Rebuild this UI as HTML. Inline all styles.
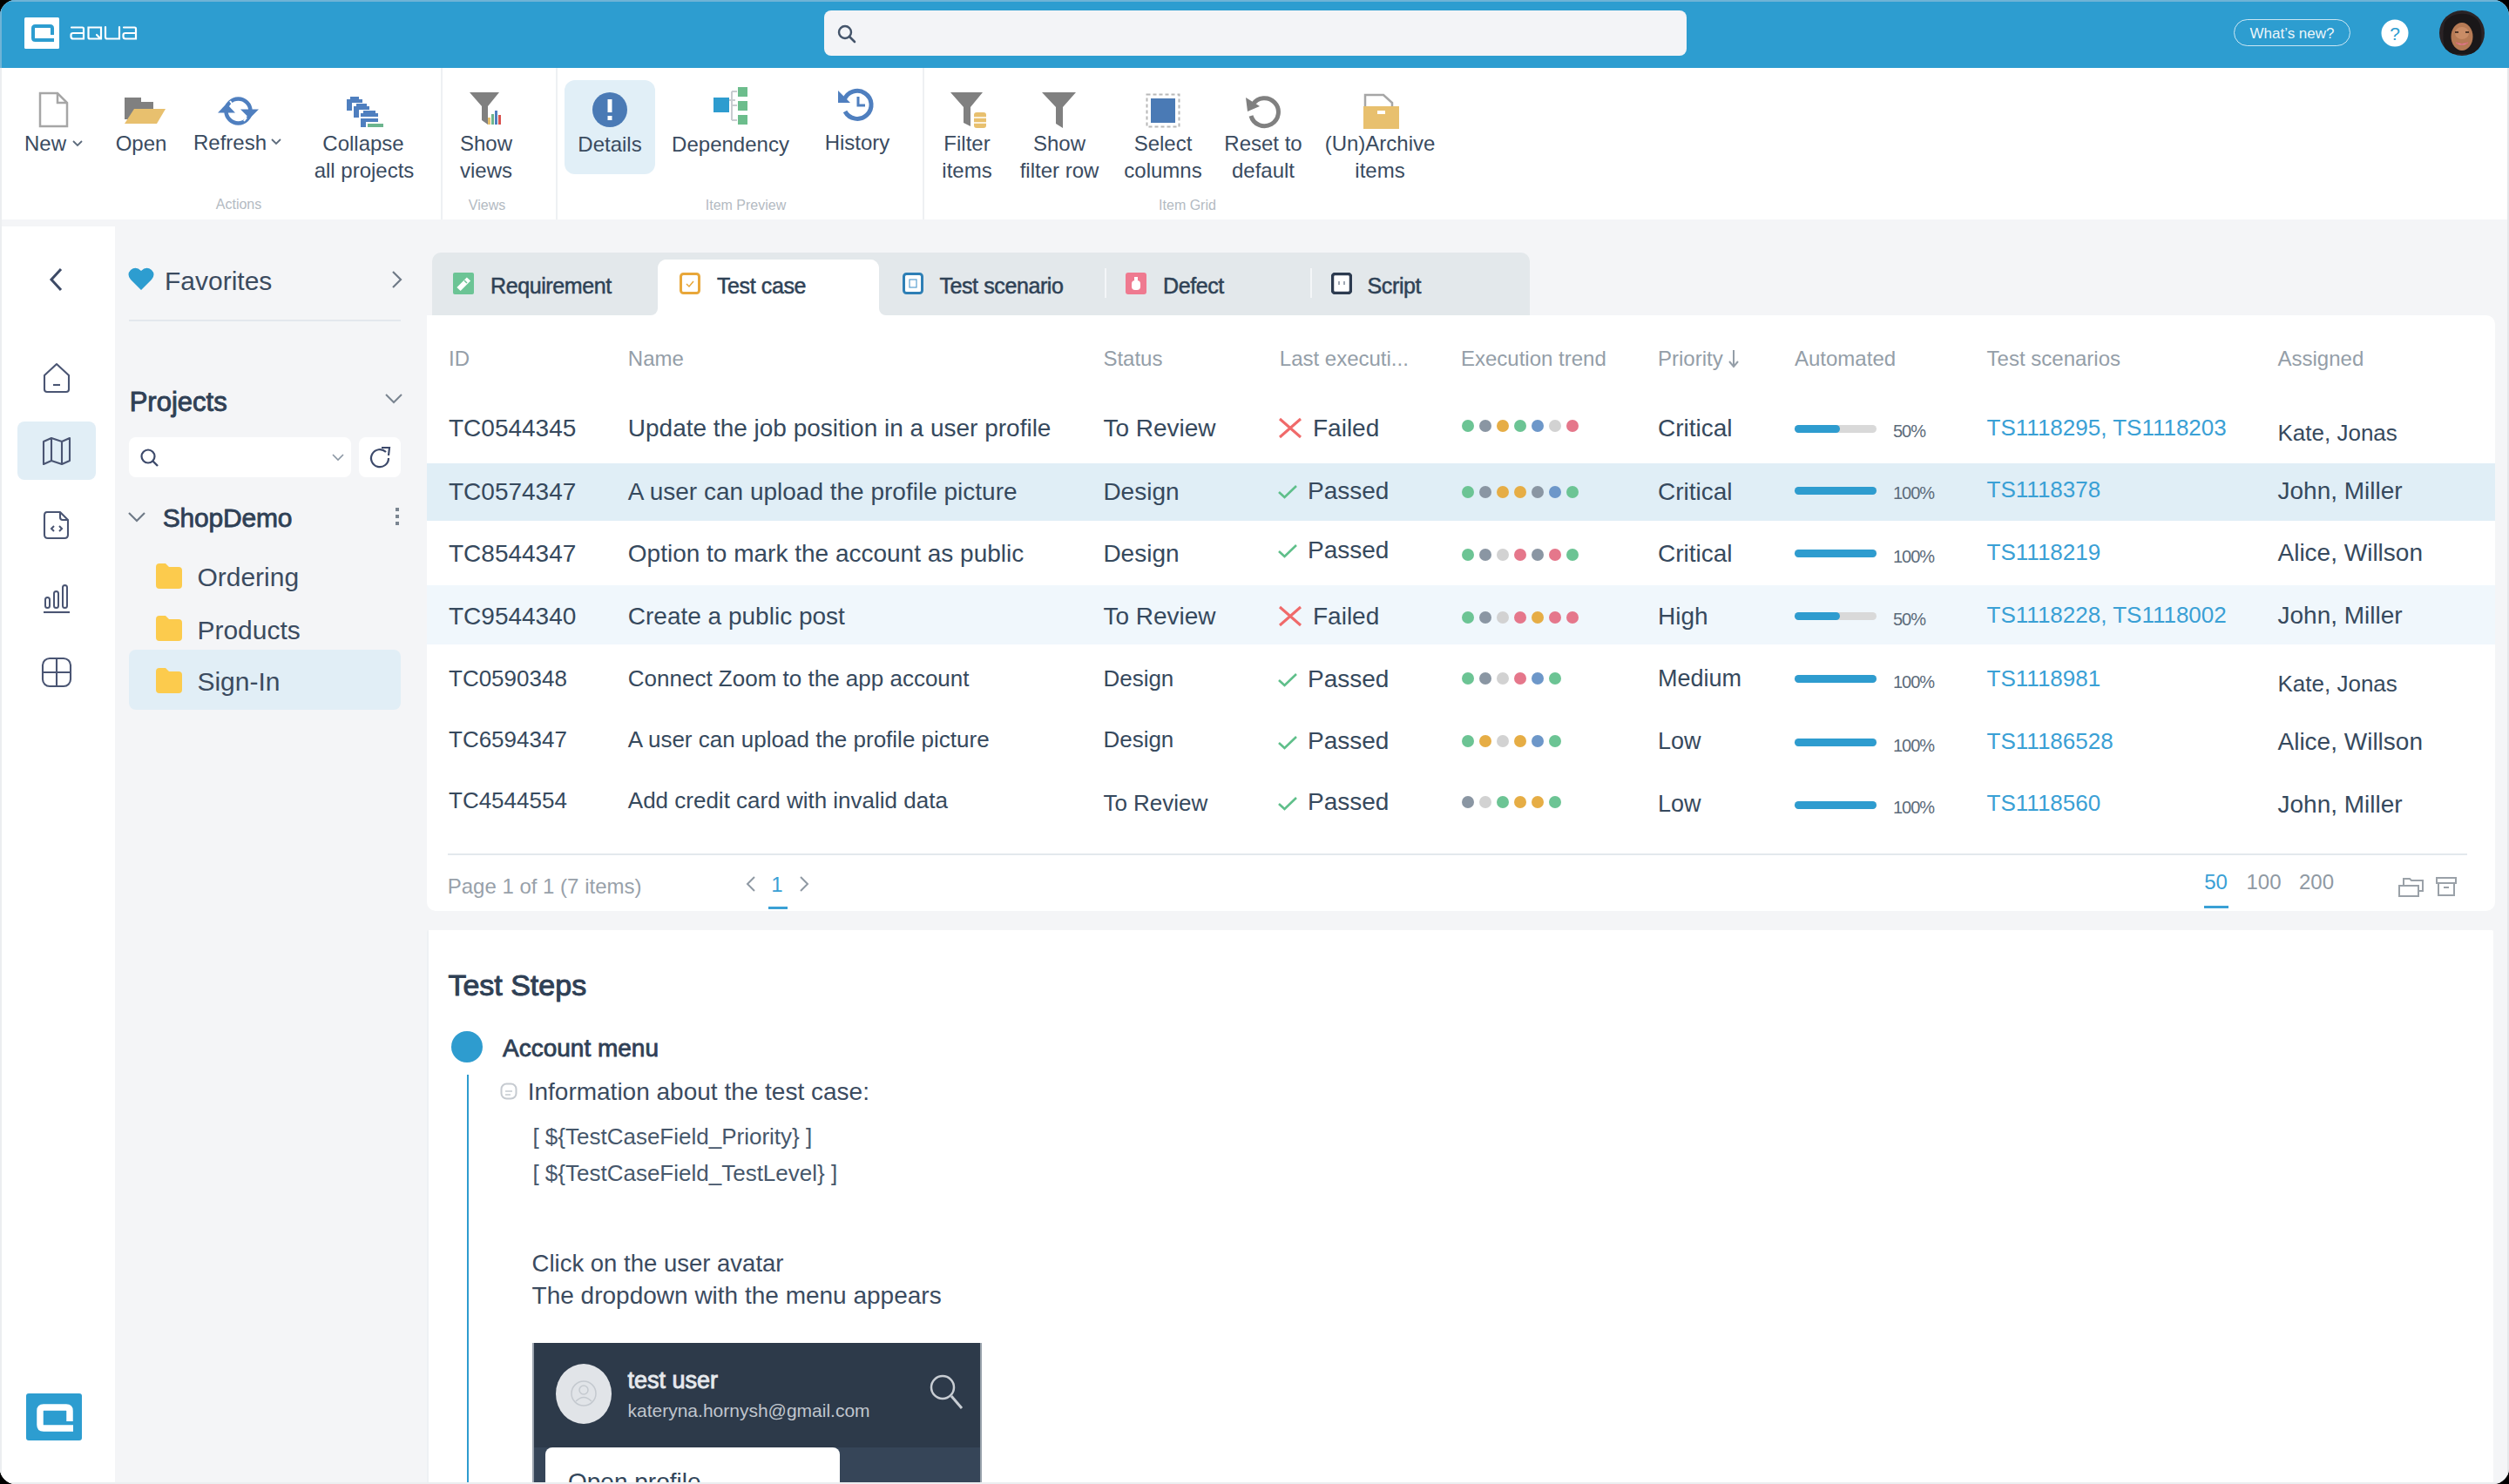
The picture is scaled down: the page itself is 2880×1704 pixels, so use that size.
<!DOCTYPE html><html><head><meta charset="utf-8"><title>aqua</title><style>
html,body{margin:0;padding:0;background:#000;}
body{width:2880px;height:1704px;overflow:hidden;position:relative;font-family:"Liberation Sans", sans-serif;}
#win{position:absolute;left:0;top:0;width:2880px;height:1704px;overflow:hidden;border-radius:18px;background:#f4f5f7;}
.t{position:absolute;white-space:pre;}
.r{position:absolute;}
</style></head><body><div id="win">
<div class="r" style="left:0px;top:0px;width:2880px;height:78px;background:#2d9dd0;border-radius:0px;"></div>
<div class="r" style="left:0px;top:0px;width:2880px;height:2px;background:#6fb3d6;border-radius:0px;"></div>
<svg class="r" style="left:28px;top:20px;" width="40" height="36" viewBox="0 0 40 36"><rect x="0" y="0" width="40" height="36" rx="1.5" fill="#fff"/><path d="M32 20 V12.5 Q32 10 29.5 10 H12.5 Q10 10 10 12.5 V23.5 Q10 26 12.5 26 H34" fill="none" stroke="#2d9dd0" stroke-width="4"/></svg>
<svg class="r" style="left:80px;top:29px;" width="78" height="18" viewBox="0 0 78 18"><g fill="none" stroke="#fff" stroke-width="2.2" stroke-linecap="round"><path d="M2 2.5 H14.5 Q16 2.5 16 4 V15.5 H4 Q1.5 15.5 1.5 13 V11 Q1.5 9 4 9 H16"/><path d="M21.5 2.5 H36 V15.5 H23 Q21.5 15.5 21.5 14 Z M31 11 L35 15"/><path d="M41 2 V13.5 Q41 15.5 43 15.5 H57 V2"/><path d="M62 2.5 H74.5 Q76 2.5 76 4 V15.5 H64 Q61.5 15.5 61.5 13 V11 Q61.5 9 64 9 H76"/></g></svg>
<div class="r" style="left:946px;top:12px;width:990px;height:52px;background:#f3f4f7;border-radius:8px;"></div>
<svg class="r" style="left:960px;top:27px;" width="24" height="24" viewBox="0 0 24 24"><circle cx="10" cy="10" r="7" fill="none" stroke="#44546a" stroke-width="2.4"/><path d="M15 15 L21 21" stroke="#44546a" stroke-width="2.6" stroke-linecap="round"/></svg>
<div class="r" style="left:2564px;top:22px;width:134px;height:31px;background:transparent;border-radius:16px;border:1.5px solid rgba(255,255,255,0.75);box-sizing:border-box;"></div>
<div class="t" style="left:2031px;width:1200px;text-align:center;top:29.6px;font-size:17px;line-height:17px;color:rgba(255,255,255,0.92);font-weight:400;">What’s new?</div>
<svg class="r" style="left:2733px;top:22px;" width="32" height="32" viewBox="0 0 32 32"><circle cx="16" cy="16" r="15.5" fill="#fff"/><text x="16" y="23.5" font-family="Liberation Sans" font-size="21" fill="#2d9dd0" text-anchor="middle">?</text></svg>
<svg class="r" style="left:2800px;top:12px;" width="52" height="52" viewBox="0 0 52 52"><defs><clipPath id="avc"><circle cx="26" cy="26" r="26"/></clipPath></defs><g clip-path="url(#avc)"><rect width="52" height="52" fill="#2a2326"/><path d="M6 14 Q14 2 30 4 Q46 6 48 22 Q50 36 44 50 H8 Q2 34 6 14 Z" fill="#1a1719"/><ellipse cx="26" cy="30" rx="12.5" ry="16" fill="#b67a55"/><ellipse cx="26" cy="26" rx="8" ry="7" fill="#c98c66"/><path d="M19 37 Q26 42 33 37 Q26 40 19 37 Z" fill="#f4e4e4" stroke="#d86a7a" stroke-width="1"/><path d="M18 25 H22 M30 25 H34" stroke="#2a1a14" stroke-width="1.6"/></g></svg>
<div class="r" style="left:0px;top:78px;width:2880px;height:174px;background:#ffffff;border-radius:0px;"></div>
<div class="r" style="left:506px;top:78px;width:2px;height:174px;background:#eef0f3;border-radius:0px;"></div>
<div class="r" style="left:638px;top:78px;width:2px;height:174px;background:#eef0f3;border-radius:0px;"></div>
<div class="r" style="left:1059px;top:78px;width:2px;height:174px;background:#eef0f3;border-radius:0px;"></div>
<div class="r" style="left:648px;top:92px;width:104px;height:108px;background:#e1eff7;border-radius:12px;"></div>
<div class="t" style="left:-548px;width:1200px;text-align:center;top:153.4px;font-size:24px;line-height:24px;color:#3a4b5f;font-weight:400;">New</div>
<svg class="r" style="left:82px;top:160px;" width="14" height="10" viewBox="0 0 14 10"><path d="M2 2 L7 7 L12 2" fill="none" stroke="#5d6b7c" stroke-width="1.8"/></svg>
<div class="t" style="left:-438px;width:1200px;text-align:center;top:153.4px;font-size:24px;line-height:24px;color:#3a4b5f;font-weight:400;">Open</div>
<div class="t" style="left:-336px;width:1200px;text-align:center;top:151.7px;font-size:24px;line-height:24px;color:#3a4b5f;font-weight:400;">Refresh</div>
<svg class="r" style="left:310px;top:158px;" width="14" height="10" viewBox="0 0 14 10"><path d="M2 2 L7 7 L12 2" fill="none" stroke="#5d6b7c" stroke-width="1.8"/></svg>
<div class="t" style="left:-183px;width:1200px;text-align:center;top:153.4px;font-size:24px;line-height:24px;color:#3a4b5f;font-weight:400;">Collapse</div>
<div class="t" style="left:-182px;width:1200px;text-align:center;top:184.2px;font-size:24px;line-height:24px;color:#3a4b5f;font-weight:400;">all projects</div>
<div class="t" style="left:-42px;width:1200px;text-align:center;top:153.4px;font-size:24px;line-height:24px;color:#3a4b5f;font-weight:400;">Show</div>
<div class="t" style="left:-42px;width:1200px;text-align:center;top:184.2px;font-size:24px;line-height:24px;color:#3a4b5f;font-weight:400;">views</div>
<div class="t" style="left:100px;width:1200px;text-align:center;top:153.7px;font-size:24px;line-height:24px;color:#3a4b5f;font-weight:400;">Details</div>
<div class="t" style="left:238.5px;width:1200px;text-align:center;top:153.7px;font-size:24px;line-height:24px;color:#3a4b5f;font-weight:400;">Dependency</div>
<div class="t" style="left:384px;width:1200px;text-align:center;top:152.1px;font-size:24px;line-height:24px;color:#3a4b5f;font-weight:400;">History</div>
<div class="t" style="left:510px;width:1200px;text-align:center;top:153.4px;font-size:24px;line-height:24px;color:#3a4b5f;font-weight:400;">Filter</div>
<div class="t" style="left:510px;width:1200px;text-align:center;top:184.4px;font-size:24px;line-height:24px;color:#3a4b5f;font-weight:400;">items</div>
<div class="t" style="left:616px;width:1200px;text-align:center;top:153.4px;font-size:24px;line-height:24px;color:#3a4b5f;font-weight:400;">Show</div>
<div class="t" style="left:616px;width:1200px;text-align:center;top:184.4px;font-size:24px;line-height:24px;color:#3a4b5f;font-weight:400;">filter row</div>
<div class="t" style="left:735px;width:1200px;text-align:center;top:153.4px;font-size:24px;line-height:24px;color:#3a4b5f;font-weight:400;">Select</div>
<div class="t" style="left:735px;width:1200px;text-align:center;top:184.4px;font-size:24px;line-height:24px;color:#3a4b5f;font-weight:400;">columns</div>
<div class="t" style="left:850px;width:1200px;text-align:center;top:153.4px;font-size:24px;line-height:24px;color:#3a4b5f;font-weight:400;">Reset to</div>
<div class="t" style="left:850px;width:1200px;text-align:center;top:184.4px;font-size:24px;line-height:24px;color:#3a4b5f;font-weight:400;">default</div>
<div class="t" style="left:984px;width:1200px;text-align:center;top:153.4px;font-size:24px;line-height:24px;color:#3a4b5f;font-weight:400;">(Un)Archive</div>
<div class="t" style="left:984px;width:1200px;text-align:center;top:184.4px;font-size:24px;line-height:24px;color:#3a4b5f;font-weight:400;">items</div>
<div class="t" style="left:-326px;width:1200px;text-align:center;top:226.5px;font-size:16px;line-height:16px;color:#b3bac2;font-weight:400;">Actions</div>
<div class="t" style="left:-41px;width:1200px;text-align:center;top:227.5px;font-size:16px;line-height:16px;color:#b3bac2;font-weight:400;">Views</div>
<div class="t" style="left:256px;width:1200px;text-align:center;top:227.5px;font-size:16px;line-height:16px;color:#b3bac2;font-weight:400;">Item Preview</div>
<div class="t" style="left:763px;width:1200px;text-align:center;top:227.5px;font-size:16px;line-height:16px;color:#b3bac2;font-weight:400;">Item Grid</div>
<svg class="r" style="left:44px;top:105px;" width="35" height="42" viewBox="0 0 35 42"><path d="M2 2 H22 L33 13 V40 H2 Z" fill="#fff" stroke="#a6a6a6" stroke-width="2.5"/><path d="M22 2 V13 H33" fill="none" stroke="#a6a6a6" stroke-width="2.5"/></svg>
<svg class="r" style="left:142px;top:111px;" width="48" height="33" viewBox="0 0 48 33"><path d="M1 2 H20 V6 H34 V14 H1 Z" fill="#808080"/><path d="M1 1 H20 V6 H34 V26 H1 Z" fill="#808080"/><path d="M12 14 H48 L38 31 H1 Z" fill="#e8c06e"/></svg>
<svg class="r" style="left:250px;top:109px;" width="48" height="38" viewBox="0 0 48 38"><circle cx="23.5" cy="18.5" r="14" fill="none" stroke="#4f7fbf" stroke-width="4.5"/><path d="M0 20.5 L20 20.5 L10 10 Z" fill="#4f7fbf"/><path d="M26 16.5 L47 16.5 L36.5 27 Z" fill="#4f7fbf"/><path d="M14 7 L17 11" stroke="#fff" stroke-width="2"/><path d="M30 30 L33 26" stroke="#fff" stroke-width="2"/></svg>
<svg class="r" style="left:396px;top:108px;" width="46" height="40" viewBox="0 0 46 40"><g fill="#4f7fbf"><rect x="2" y="6" width="18" height="4"/><rect x="6" y="3" width="10" height="3"/><rect x="2" y="10" width="6" height="9"/><rect x="10" y="14" width="18" height="4"/><rect x="13" y="11" width="12" height="3"/><rect x="10" y="18" width="6" height="9"/><rect x="18" y="22" width="20" height="4"/><rect x="21" y="19" width="14" height="3"/><rect x="18" y="28" width="20" height="4"/><rect x="18" y="32" width="6" height="6"/></g><rect x="26" y="34" width="18" height="4" fill="#6cb58e"/></svg>
<svg class="r" style="left:538px;top:105px;" width="40" height="40" viewBox="0 0 40 40"><path d="M1 1 H35 L22 17 V38 L15 33 V17 Z" fill="#808080"/><rect x="22" y="30" width="3" height="8" fill="#e8c06e"/><rect x="26" y="26" width="3" height="12" fill="#6cb58e"/><rect x="30" y="22" width="3" height="16" fill="#4f7fbf"/><rect x="34" y="27" width="3" height="11" fill="#d9534f"/></svg>
<svg class="r" style="left:680px;top:106px;" width="40" height="40" viewBox="0 0 40 40"><circle cx="20" cy="20" r="20" fill="#4a7ab5"/><rect x="17.5" y="8" width="5" height="15" fill="#fff"/><rect x="17.5" y="27" width="5" height="5" fill="#fff"/></svg>
<svg class="r" style="left:818px;top:99px;" width="44" height="46" viewBox="0 0 44 46"><path d="M18 16 H26 M22 6 V39 M22 6 H28 M22 22 H28 M22 39 H28" stroke="#c8ccd0" stroke-width="2" fill="none"/><rect x="1" y="13" width="18" height="17" fill="#2e9ccf"/><rect x="29" y="1" width="11" height="11" fill="#6cbd8c"/><rect x="29" y="17" width="11" height="11" fill="#6cbd8c"/><rect x="29" y="33" width="11" height="11" fill="#6cbd8c"/></svg>
<svg class="r" style="left:961px;top:99px;" width="44" height="42" viewBox="0 0 44 42"><path d="M8 16 A16 16 0 1 1 9 29" fill="none" stroke="#4f7fbf" stroke-width="5"/><path d="M1 5 V19 H15 Z" fill="#4f7fbf"/><path d="M24 12 V22 H32" fill="none" stroke="#4f7fbf" stroke-width="3"/></svg>
<svg class="r" style="left:1090px;top:105px;" width="44" height="44" viewBox="0 0 44 44"><path d="M1 1 H38 L24 18 V40 L16 36 V18 Z" fill="#808080"/><g fill="#e8c06e"><rect x="28" y="24" width="14" height="18" rx="3"/></g><path d="M28 30 H42 M28 36 H42" stroke="#fff" stroke-width="1.5"/></svg>
<svg class="r" style="left:1195px;top:105px;" width="42" height="44" viewBox="0 0 42 44"><path d="M1 1 H40 L25 18 V42 L17 37 V18 Z" fill="#808080"/></svg>
<svg class="r" style="left:1315px;top:107px;" width="40" height="40" viewBox="0 0 40 40"><rect x="1.5" y="1.5" width="37" height="37" fill="none" stroke="#b8b8b8" stroke-width="2" stroke-dasharray="4 3"/><rect x="6" y="6" width="28" height="28" fill="#4a7ab5"/></svg>
<svg class="r" style="left:1429px;top:107px;" width="44" height="42" viewBox="0 0 44 42"><path d="M9 13 A16 16 0 1 1 7 26" fill="none" stroke="#808080" stroke-width="5"/><path d="M1 5 L3 21 L17 15 Z" fill="#808080"/></svg>
<svg class="r" style="left:1564px;top:107px;" width="44" height="42" viewBox="0 0 44 42"><path d="M3 2 H24 L34 11 V20 H3 Z" fill="#fff" stroke="#a6a6a6" stroke-width="2.5"/><rect x="1" y="15" width="41" height="26" fill="#e8c06e"/><rect x="17" y="20" width="9" height="4" fill="#fff"/></svg>
<div class="r" style="left:0px;top:260px;width:132px;height:1444px;background:#ffffff;border-radius:0px;"></div>
<svg class="r" style="left:54px;top:306px;" width="22" height="30" viewBox="0 0 22 30"><path d="M16 3 L5 15 L16 27" fill="none" stroke="#3d4a66" stroke-width="3"/></svg>
<div class="r" style="left:20px;top:484px;width:90px;height:67px;background:#e1eef6;border-radius:8px;"></div>
<svg class="r" style="left:47px;top:416px;" width="36" height="36" viewBox="0 0 36 36"><path d="M4 15 L18 2 L32 15 V31 Q32 34 29 34 H7 Q4 34 4 31 Z" fill="none" stroke="#4a5573" stroke-width="2.1" stroke-linejoin="round"/><path d="M14 26 H22" stroke="#4a5573" stroke-width="2.1"/></svg>
<svg class="r" style="left:47px;top:500px;" width="36" height="36" viewBox="0 0 36 36"><path d="M3 7 L12 3 L24 7 L33 3 V29 L24 33 L12 29 L3 33 Z M12 3 V29 M24 7 V33" fill="none" stroke="#4a5573" stroke-width="2.1" stroke-linejoin="round"/></svg>
<svg class="r" style="left:47px;top:585px;" width="36" height="36" viewBox="0 0 36 36"><path d="M7 3 H22 L31 12 V29 Q31 33 27 33 H8 Q4 33 4 29 V7 Q4 3 7 3 Z M22 3 V9 Q22 12 25 12 H31" fill="none" stroke="#4a5573" stroke-width="2.1" stroke-linejoin="round"/><path d="M15 19 L12 22 L15 25 M21 19 L24 22 L21 25" fill="none" stroke="#4a5573" stroke-width="2"/></svg>
<svg class="r" style="left:47px;top:668px;" width="36" height="38" viewBox="0 0 36 38"><path d="M3 35 H33" stroke="#4a5573" stroke-width="2.1"/><rect x="5" y="18" width="5" height="12" rx="2.5" fill="none" stroke="#4a5573" stroke-width="2"/><rect x="15" y="11" width="5" height="19" rx="2.5" fill="none" stroke="#4a5573" stroke-width="2"/><rect x="25" y="4" width="5" height="26" rx="2.5" fill="none" stroke="#4a5573" stroke-width="2"/></svg>
<svg class="r" style="left:46px;top:753px;" width="38" height="38" viewBox="0 0 38 38"><rect x="3" y="3" width="32" height="32" rx="8" fill="none" stroke="#4a5573" stroke-width="2.1"/><path d="M19 3 V35 M3 19 H35" stroke="#4a5573" stroke-width="2.1"/></svg>
<svg class="r" style="left:30px;top:1600px;" width="64" height="54" viewBox="0 0 64 54"><rect x="0" y="0" width="64" height="54" rx="3" fill="#2d9dd0"/><path d="M50 32 V20 Q50 16 46 16 H20 Q16 16 16 20 V36 Q16 40 20 40 H54" fill="none" stroke="#fff" stroke-width="7.5"/></svg>
<svg class="r" style="left:147px;top:306px;" width="30" height="28" viewBox="0 0 30 28"><path d="M15 27 L3 15 Q-2 9 3 4 Q9 -1 15 5 Q21 -1 27 4 Q32 9 27 15 Z" fill="#2d9dd0"/></svg>
<div class="t" style="left:189px;top:308.4px;font-size:30px;line-height:30px;color:#3b4b5f;font-weight:400;">Favorites</div>
<svg class="r" style="left:448px;top:309px;" width="16" height="24" viewBox="0 0 16 24"><path d="M3 3 L12 12 L3 21" fill="none" stroke="#6f7a87" stroke-width="2.2"/></svg>
<div class="r" style="left:148px;top:367px;width:312px;height:2px;background:#e3e8ed;border-radius:0px;"></div>
<div class="t" style="left:148.7px;top:446.2px;font-size:31px;line-height:31px;color:#2f4055;font-weight:400;-webkit-text-stroke:0.9px #2f4055;">Projects</div>
<svg class="r" style="left:440px;top:450px;" width="24" height="16" viewBox="0 0 24 16"><path d="M3 3 L12 12 L21 3" fill="none" stroke="#7a8591" stroke-width="2"/></svg>
<div class="r" style="left:148px;top:502px;width:255px;height:46px;background:#ffffff;border-radius:8px;"></div>
<svg class="r" style="left:160px;top:514px;" width="24" height="24" viewBox="0 0 24 24"><circle cx="10" cy="10" r="7.5" fill="none" stroke="#3d4a6b" stroke-width="2.2"/><path d="M15.5 15.5 L21 21" stroke="#3d4a6b" stroke-width="2.4"/></svg>
<svg class="r" style="left:380px;top:520px;" width="16" height="10" viewBox="0 0 16 10"><path d="M2 2 L8 8 L14 2" fill="none" stroke="#8a96a3" stroke-width="1.6"/></svg>
<div class="r" style="left:412px;top:502px;width:48px;height:46px;background:#ffffff;border-radius:8px;"></div>
<svg class="r" style="left:422px;top:512px;" width="28" height="28" viewBox="0 0 28 28"><path d="M21 7 A10 10 0 1 0 24 14" fill="none" stroke="#3d4a6b" stroke-width="2.2"/><path d="M16 2 L25 2 L24 11" fill="none" stroke="#3d4a6b" stroke-width="2.2"/></svg>
<svg class="r" style="left:145px;top:585px;" width="24" height="18" viewBox="0 0 24 18"><path d="M3 4 L12 13 L21 4" fill="none" stroke="#6f7a87" stroke-width="2.2"/></svg>
<div class="t" style="left:186.7px;top:580.4px;font-size:30px;line-height:30px;color:#2f4055;font-weight:400;-webkit-text-stroke:0.8px #2f4055;letter-spacing:-0.2px;">ShopDemo</div>
<svg class="r" style="left:450px;top:582px;" width="12" height="24" viewBox="0 0 12 24"><rect x="4" y="1" width="4" height="4" fill="#7a8591"/><rect x="4" y="9" width="4" height="4" fill="#7a8591"/><rect x="4" y="17" width="4" height="4" fill="#7a8591"/></svg>
<div class="r" style="left:148px;top:746px;width:312px;height:69px;background:#e1eef6;border-radius:8px;"></div>
<svg class="r" style="left:179px;top:647px;" width="30" height="30" viewBox="0 0 30 30"><path d="M0 4 Q0 0 4 0 H11 L15 4 H26 Q30 4 30 8 V25 Q30 29 26 29 H4 Q0 29 0 25 Z" fill="#fccb4d"/></svg>
<div class="t" style="left:226.4px;top:648.3px;font-size:30px;line-height:30px;color:#3b4b5f;font-weight:400;">Ordering</div>
<svg class="r" style="left:179px;top:707px;" width="30" height="30" viewBox="0 0 30 30"><path d="M0 4 Q0 0 4 0 H11 L15 4 H26 Q30 4 30 8 V25 Q30 29 26 29 H4 Q0 29 0 25 Z" fill="#fccb4d"/></svg>
<div class="t" style="left:226.4px;top:708.6px;font-size:30px;line-height:30px;color:#3b4b5f;font-weight:400;">Products</div>
<svg class="r" style="left:179px;top:767px;" width="30" height="30" viewBox="0 0 30 30"><path d="M0 4 Q0 0 4 0 H11 L15 4 H26 Q30 4 30 8 V25 Q30 29 26 29 H4 Q0 29 0 25 Z" fill="#fccb4d"/></svg>
<div class="t" style="left:226.4px;top:768.4px;font-size:30px;line-height:30px;color:#3b4b5f;font-weight:400;">Sign-In</div>
<div class="r" style="left:496px;top:290px;width:1260px;height:72px;background:#e3e8eb;border-radius:10px;border-bottom-left-radius:0;border-bottom-right-radius:0;"></div>
<div class="r" style="left:755px;top:298px;width:254px;height:70px;background:#ffffff;border-radius:10px;"></div>
<div class="t" style="left:563px;top:315.8px;font-size:25px;line-height:25px;color:#2f4256;font-weight:400;letter-spacing:-0.4px;-webkit-text-stroke:0.5px #2f4256;">Requirement</div>
<div class="t" style="left:823px;top:315.8px;font-size:25px;line-height:25px;color:#2f4256;font-weight:400;letter-spacing:-0.4px;-webkit-text-stroke:0.5px #2f4256;">Test case</div>
<div class="t" style="left:1078.4px;top:315.8px;font-size:25px;line-height:25px;color:#2f4256;font-weight:400;letter-spacing:-0.4px;-webkit-text-stroke:0.5px #2f4256;">Test scenario</div>
<div class="t" style="left:1335px;top:315.8px;font-size:25px;line-height:25px;color:#2f4256;font-weight:400;letter-spacing:-0.4px;-webkit-text-stroke:0.5px #2f4256;">Defect</div>
<div class="t" style="left:1569.6px;top:315.8px;font-size:25px;line-height:25px;color:#2f4256;font-weight:400;letter-spacing:-0.4px;-webkit-text-stroke:0.5px #2f4256;">Script</div>
<div class="r" style="left:1268px;top:308px;width:2px;height:34px;background:#f4f6f8;border-radius:0px;"></div>
<div class="r" style="left:1504px;top:308px;width:2px;height:34px;background:#f4f6f8;border-radius:0px;"></div>
<svg class="r" style="left:520px;top:313px;" width="24" height="25" viewBox="0 0 24 25"><rect x="0" y="0" width="24" height="25" rx="2" fill="#6cc495"/><path d="M6.5 19 L18 7.5" stroke="#fff" stroke-width="6"/><path d="M13 9 L16 12" stroke="#6cc495" stroke-width="1.5"/></svg>
<svg class="r" style="left:780px;top:313px;" width="24" height="25" viewBox="0 0 24 25"><rect x="1" y="1" width="22" height="23" rx="3" fill="#fff" stroke="#e8a73a" stroke-width="3"/><path d="M8 13 L11 16 L16 10" fill="none" stroke="#e8a73a" stroke-width="1.5"/></svg>
<svg class="r" style="left:1036px;top:313px;" width="24" height="25" viewBox="0 0 24 25"><rect x="1.5" y="1.5" width="21" height="22" rx="3" fill="#fff" stroke="#2e7fb5" stroke-width="3"/><rect x="8" y="8" width="8" height="9" fill="none" stroke="#5aa0d0" stroke-width="1.2"/></svg>
<svg class="r" style="left:1292px;top:313px;" width="24" height="25" viewBox="0 0 24 25"><rect x="0" y="0" width="24" height="25" rx="3" fill="#ef7a90"/><rect x="7" y="9" width="10" height="11" rx="4" fill="#fff"/><rect x="10" y="5" width="4" height="4" fill="#fff"/></svg>
<svg class="r" style="left:1528px;top:313px;" width="24" height="25" viewBox="0 0 24 25"><rect x="1.5" y="1.5" width="21" height="22" rx="3" fill="#fff" stroke="#2d3b50" stroke-width="3.5"/><rect x="8" y="10" width="2" height="4" fill="#a0a8b4"/><rect x="14" y="10" width="2" height="4" fill="#a0a8b4"/></svg>
<div class="r" style="left:490px;top:362px;width:2374px;height:684px;background:#ffffff;border-radius:10px;border-top-left-radius:0;"></div>
<div class="r" style="left:735px;top:340px;width:20px;height:22px;background:#ffffff;border-radius:0px;"></div>
<div class="r" style="left:1009px;top:340px;width:20px;height:22px;background:#ffffff;border-radius:0px;"></div>
<div class="r" style="left:735px;top:330px;width:20px;height:32px;background:#e3e8eb;border-radius:0px;border-bottom-right-radius:8px;"></div>
<div class="r" style="left:1009px;top:330px;width:20px;height:32px;background:#e3e8eb;border-radius:0px;border-bottom-left-radius:8px;"></div>
<div class="r" style="left:755px;top:298px;width:254px;height:70px;background:#ffffff;border-radius:10px;border-bottom-left-radius:0;border-bottom-right-radius:0;"></div>
<div class="t" style="left:823px;top:315.8px;font-size:25px;line-height:25px;color:#2f4256;font-weight:400;letter-spacing:-0.4px;-webkit-text-stroke:0.5px #2f4256;">Test case</div>
<svg class="r" style="left:780px;top:313px;" width="24" height="25" viewBox="0 0 24 25"><rect x="1.5" y="1.5" width="21" height="22" rx="3" fill="#fff" stroke="#e8a73a" stroke-width="3"/><path d="M8 13 L11 16 L16 10" fill="none" stroke="#e8a73a" stroke-width="1.5"/></svg>
<div class="t" style="left:515px;top:399.7px;font-size:24px;line-height:24px;color:#949ea8;font-weight:400;">ID</div>
<div class="t" style="left:720.8px;top:399.7px;font-size:24px;line-height:24px;color:#949ea8;font-weight:400;">Name</div>
<div class="t" style="left:1266.4px;top:399.7px;font-size:24px;line-height:24px;color:#949ea8;font-weight:400;">Status</div>
<div class="t" style="left:1468.8px;top:399.7px;font-size:24px;line-height:24px;color:#949ea8;font-weight:400;">Last executi...</div>
<div class="t" style="left:1677px;top:399.7px;font-size:24px;line-height:24px;color:#949ea8;font-weight:400;">Execution trend</div>
<div class="t" style="left:1903px;top:399.7px;font-size:24px;line-height:24px;color:#949ea8;font-weight:400;">Priority</div>
<svg class="r" style="left:1982px;top:400px;" width="16" height="24" viewBox="0 0 16 24"><path d="M8 2 V20 M3 15 L8 21 L13 15" fill="none" stroke="#949ea8" stroke-width="2"/></svg>
<div class="t" style="left:2060px;top:399.7px;font-size:24px;line-height:24px;color:#949ea8;font-weight:400;">Automated</div>
<div class="t" style="left:2280.6px;top:399.7px;font-size:24px;line-height:24px;color:#949ea8;font-weight:400;">Test scenarios</div>
<div class="t" style="left:2614.5px;top:399.7px;font-size:24px;line-height:24px;color:#949ea8;font-weight:400;">Assigned</div>
<div class="r" style="left:490px;top:532px;width:2374px;height:66px;background:#e0eef6;border-radius:0px;"></div>
<div class="r" style="left:490px;top:672px;width:2374px;height:68px;background:#f0f7fc;border-radius:0px;"></div>
<div class="t" style="left:515px;top:478.3px;font-size:28px;line-height:28px;color:#36495d;font-weight:400;">TC0544345</div>
<div class="t" style="left:720.8px;top:478.3px;font-size:28px;line-height:28px;color:#36495d;font-weight:400;">Update the job position in a user profile</div>
<div class="t" style="left:1266.4px;top:478.3px;font-size:28px;line-height:28px;color:#36495d;font-weight:400;">To Review</div>
<svg class="r" style="left:1467px;top:479px;" width="28" height="25" viewBox="0 0 28 25"><path d="M2 2 L26 23 M26 2 L2 23" fill="none" stroke="#f06a6a" stroke-width="3"/></svg>
<div class="t" style="left:1507px;top:478.3px;font-size:28px;line-height:28px;color:#36495d;font-weight:400;">Failed</div>
<div class="r" style="left:1678px;top:481.5px;width:14px;height:14px;border-radius:7px;background:#6cc494"></div>
<div class="r" style="left:1698px;top:481.5px;width:14px;height:14px;border-radius:7px;background:#8a96a3"></div>
<div class="r" style="left:1718px;top:481.5px;width:14px;height:14px;border-radius:7px;background:#e6ad45"></div>
<div class="r" style="left:1738px;top:481.5px;width:14px;height:14px;border-radius:7px;background:#6cc494"></div>
<div class="r" style="left:1758px;top:481.5px;width:14px;height:14px;border-radius:7px;background:#6d97c9"></div>
<div class="r" style="left:1778px;top:481.5px;width:14px;height:14px;border-radius:7px;background:#d2d2d2"></div>
<div class="r" style="left:1798px;top:481.5px;width:14px;height:14px;border-radius:7px;background:#e5778b"></div>
<div class="t" style="left:1903px;top:478.3px;font-size:28px;line-height:28px;color:#36495d;font-weight:400;">Critical</div>
<div class="r" style="left:2060px;top:487.5px;width:94px;height:9px;background:#d9d9d9;border-radius:5px;"></div>
<div class="r" style="left:2060px;top:487.5px;width:52px;height:9px;background:#2e9ccf;border-radius:5px;"></div>
<div class="t" style="left:2173px;top:485.1px;font-size:20px;line-height:20px;color:#5c6b7a;font-weight:400;letter-spacing:-1px;">50%</div>
<div class="t" style="left:2280.6px;top:477.6px;font-size:26px;line-height:26px;color:#3aa0d5;font-weight:400;">TS1118295, TS1118203</div>
<div class="t" style="left:2614.5px;top:483.5px;font-size:26px;line-height:26px;color:#36495d;font-weight:400;">Kate, Jonas</div>
<div class="t" style="left:515px;top:550.5px;font-size:28px;line-height:28px;color:#36495d;font-weight:400;">TC0574347</div>
<div class="t" style="left:720.8px;top:550.5px;font-size:28px;line-height:28px;color:#36495d;font-weight:400;">A user can upload the profile picture</div>
<div class="t" style="left:1266.4px;top:550.5px;font-size:28px;line-height:28px;color:#36495d;font-weight:400;">Design</div>
<svg class="r" style="left:1466px;top:556.2px;" width="24" height="17" viewBox="0 0 24 17"><path d="M2 9 L8.5 15 L22 2" fill="none" stroke="#5fbf8a" stroke-width="2.6"/></svg>
<div class="t" style="left:1501px;top:550.0px;font-size:28px;line-height:28px;color:#36495d;font-weight:400;">Passed</div>
<div class="r" style="left:1678px;top:557.5px;width:14px;height:14px;border-radius:7px;background:#6cc494"></div>
<div class="r" style="left:1698px;top:557.5px;width:14px;height:14px;border-radius:7px;background:#8a96a3"></div>
<div class="r" style="left:1718px;top:557.5px;width:14px;height:14px;border-radius:7px;background:#e6ad45"></div>
<div class="r" style="left:1738px;top:557.5px;width:14px;height:14px;border-radius:7px;background:#e6ad45"></div>
<div class="r" style="left:1758px;top:557.5px;width:14px;height:14px;border-radius:7px;background:#8a96a3"></div>
<div class="r" style="left:1778px;top:557.5px;width:14px;height:14px;border-radius:7px;background:#6d97c9"></div>
<div class="r" style="left:1798px;top:557.5px;width:14px;height:14px;border-radius:7px;background:#6cc494"></div>
<div class="t" style="left:1903px;top:550.5px;font-size:28px;line-height:28px;color:#36495d;font-weight:400;">Critical</div>
<div class="r" style="left:2060px;top:558.8px;width:94px;height:9px;background:#d9d9d9;border-radius:5px;"></div>
<div class="r" style="left:2060px;top:558.8px;width:94px;height:9px;background:#2e9ccf;border-radius:5px;"></div>
<div class="t" style="left:2173px;top:556.4px;font-size:20px;line-height:20px;color:#5c6b7a;font-weight:400;letter-spacing:-1px;">100%</div>
<div class="t" style="left:2280.6px;top:549.3px;font-size:26px;line-height:26px;color:#3aa0d5;font-weight:400;">TS1118378</div>
<div class="t" style="left:2614.5px;top:549.6px;font-size:28px;line-height:28px;color:#36495d;font-weight:400;">John, Miller</div>
<div class="t" style="left:515px;top:621.9px;font-size:28px;line-height:28px;color:#36495d;font-weight:400;">TC8544347</div>
<div class="t" style="left:720.8px;top:621.9px;font-size:28px;line-height:28px;color:#36495d;font-weight:400;">Option to mark the account as public</div>
<div class="t" style="left:1266.4px;top:621.9px;font-size:28px;line-height:28px;color:#36495d;font-weight:400;">Design</div>
<svg class="r" style="left:1466px;top:624.1px;" width="24" height="17" viewBox="0 0 24 17"><path d="M2 9 L8.5 15 L22 2" fill="none" stroke="#5fbf8a" stroke-width="2.6"/></svg>
<div class="t" style="left:1501px;top:617.9px;font-size:28px;line-height:28px;color:#36495d;font-weight:400;">Passed</div>
<div class="r" style="left:1678px;top:629.5px;width:14px;height:14px;border-radius:7px;background:#6cc494"></div>
<div class="r" style="left:1698px;top:629.5px;width:14px;height:14px;border-radius:7px;background:#8a96a3"></div>
<div class="r" style="left:1718px;top:629.5px;width:14px;height:14px;border-radius:7px;background:#d2d2d2"></div>
<div class="r" style="left:1738px;top:629.5px;width:14px;height:14px;border-radius:7px;background:#e5778b"></div>
<div class="r" style="left:1758px;top:629.5px;width:14px;height:14px;border-radius:7px;background:#8a96a3"></div>
<div class="r" style="left:1778px;top:629.5px;width:14px;height:14px;border-radius:7px;background:#e5778b"></div>
<div class="r" style="left:1798px;top:629.5px;width:14px;height:14px;border-radius:7px;background:#6cc494"></div>
<div class="t" style="left:1903px;top:621.9px;font-size:28px;line-height:28px;color:#36495d;font-weight:400;">Critical</div>
<div class="r" style="left:2060px;top:631.4px;width:94px;height:9px;background:#d9d9d9;border-radius:5px;"></div>
<div class="r" style="left:2060px;top:631.4px;width:94px;height:9px;background:#2e9ccf;border-radius:5px;"></div>
<div class="t" style="left:2173px;top:629.0px;font-size:20px;line-height:20px;color:#5c6b7a;font-weight:400;letter-spacing:-1px;">100%</div>
<div class="t" style="left:2280.6px;top:621.0px;font-size:26px;line-height:26px;color:#3aa0d5;font-weight:400;">TS1118219</div>
<div class="t" style="left:2614.5px;top:621.3px;font-size:28px;line-height:28px;color:#36495d;font-weight:400;">Alice, Willson</div>
<div class="t" style="left:515px;top:694.0px;font-size:28px;line-height:28px;color:#36495d;font-weight:400;">TC9544340</div>
<div class="t" style="left:720.8px;top:694.0px;font-size:28px;line-height:28px;color:#36495d;font-weight:400;">Create a public post</div>
<div class="t" style="left:1266.4px;top:694.0px;font-size:28px;line-height:28px;color:#36495d;font-weight:400;">To Review</div>
<svg class="r" style="left:1467px;top:694.7px;" width="28" height="25" viewBox="0 0 28 25"><path d="M2 2 L26 23 M26 2 L2 23" fill="none" stroke="#f06a6a" stroke-width="3"/></svg>
<div class="t" style="left:1507px;top:694.0px;font-size:28px;line-height:28px;color:#36495d;font-weight:400;">Failed</div>
<div class="r" style="left:1678px;top:701.8px;width:14px;height:14px;border-radius:7px;background:#6cc494"></div>
<div class="r" style="left:1698px;top:701.8px;width:14px;height:14px;border-radius:7px;background:#8a96a3"></div>
<div class="r" style="left:1718px;top:701.8px;width:14px;height:14px;border-radius:7px;background:#d2d2d2"></div>
<div class="r" style="left:1738px;top:701.8px;width:14px;height:14px;border-radius:7px;background:#e5778b"></div>
<div class="r" style="left:1758px;top:701.8px;width:14px;height:14px;border-radius:7px;background:#e6ad45"></div>
<div class="r" style="left:1778px;top:701.8px;width:14px;height:14px;border-radius:7px;background:#e5778b"></div>
<div class="r" style="left:1798px;top:701.8px;width:14px;height:14px;border-radius:7px;background:#e5778b"></div>
<div class="t" style="left:1903px;top:694.0px;font-size:28px;line-height:28px;color:#36495d;font-weight:400;">High</div>
<div class="r" style="left:2060px;top:703.1px;width:94px;height:9px;background:#d9d9d9;border-radius:5px;"></div>
<div class="r" style="left:2060px;top:703.1px;width:52px;height:9px;background:#2e9ccf;border-radius:5px;"></div>
<div class="t" style="left:2173px;top:700.7px;font-size:20px;line-height:20px;color:#5c6b7a;font-weight:400;letter-spacing:-1px;">50%</div>
<div class="t" style="left:2280.6px;top:692.8px;font-size:26px;line-height:26px;color:#3aa0d5;font-weight:400;">TS1118228, TS1118002</div>
<div class="t" style="left:2614.5px;top:693.1px;font-size:28px;line-height:28px;color:#36495d;font-weight:400;">John, Miller</div>
<div class="t" style="left:515px;top:766.0px;font-size:26px;line-height:26px;color:#36495d;font-weight:400;">TC0590348</div>
<div class="t" style="left:720.8px;top:766.0px;font-size:26px;line-height:26px;color:#36495d;font-weight:400;">Connect Zoom to the app account</div>
<div class="t" style="left:1266.4px;top:766.0px;font-size:26px;line-height:26px;color:#36495d;font-weight:400;">Design</div>
<svg class="r" style="left:1466px;top:771.8px;" width="24" height="17" viewBox="0 0 24 17"><path d="M2 9 L8.5 15 L22 2" fill="none" stroke="#5fbf8a" stroke-width="2.6"/></svg>
<div class="t" style="left:1501px;top:765.6px;font-size:28px;line-height:28px;color:#36495d;font-weight:400;">Passed</div>
<div class="r" style="left:1678px;top:771.9px;width:14px;height:14px;border-radius:7px;background:#6cc494"></div>
<div class="r" style="left:1698px;top:771.9px;width:14px;height:14px;border-radius:7px;background:#8a96a3"></div>
<div class="r" style="left:1718px;top:771.9px;width:14px;height:14px;border-radius:7px;background:#d2d2d2"></div>
<div class="r" style="left:1738px;top:771.9px;width:14px;height:14px;border-radius:7px;background:#e5778b"></div>
<div class="r" style="left:1758px;top:771.9px;width:14px;height:14px;border-radius:7px;background:#6d97c9"></div>
<div class="r" style="left:1778px;top:771.9px;width:14px;height:14px;border-radius:7px;background:#6cc494"></div>
<div class="t" style="left:1903px;top:766.4px;font-size:27px;line-height:27px;color:#36495d;font-weight:400;">Medium</div>
<div class="r" style="left:2060px;top:775.4px;width:94px;height:9px;background:#d9d9d9;border-radius:5px;"></div>
<div class="r" style="left:2060px;top:775.4px;width:94px;height:9px;background:#2e9ccf;border-radius:5px;"></div>
<div class="t" style="left:2173px;top:773.0px;font-size:20px;line-height:20px;color:#5c6b7a;font-weight:400;letter-spacing:-1px;">100%</div>
<div class="t" style="left:2280.6px;top:765.8px;font-size:26px;line-height:26px;color:#3aa0d5;font-weight:400;">TS1118981</div>
<div class="t" style="left:2614.5px;top:771.8px;font-size:26px;line-height:26px;color:#36495d;font-weight:400;">Kate, Jonas</div>
<div class="t" style="left:515px;top:835.6px;font-size:26px;line-height:26px;color:#36495d;font-weight:400;">TC6594347</div>
<div class="t" style="left:720.8px;top:835.6px;font-size:26px;line-height:26px;color:#36495d;font-weight:400;">A user can upload the profile picture</div>
<div class="t" style="left:1266.4px;top:835.6px;font-size:26px;line-height:26px;color:#36495d;font-weight:400;">Design</div>
<svg class="r" style="left:1466px;top:843.5px;" width="24" height="17" viewBox="0 0 24 17"><path d="M2 9 L8.5 15 L22 2" fill="none" stroke="#5fbf8a" stroke-width="2.6"/></svg>
<div class="t" style="left:1501px;top:837.3px;font-size:28px;line-height:28px;color:#36495d;font-weight:400;">Passed</div>
<div class="r" style="left:1678px;top:844.2px;width:14px;height:14px;border-radius:7px;background:#6cc494"></div>
<div class="r" style="left:1698px;top:844.2px;width:14px;height:14px;border-radius:7px;background:#e6ad45"></div>
<div class="r" style="left:1718px;top:844.2px;width:14px;height:14px;border-radius:7px;background:#d2d2d2"></div>
<div class="r" style="left:1738px;top:844.2px;width:14px;height:14px;border-radius:7px;background:#e6ad45"></div>
<div class="r" style="left:1758px;top:844.2px;width:14px;height:14px;border-radius:7px;background:#6d97c9"></div>
<div class="r" style="left:1778px;top:844.2px;width:14px;height:14px;border-radius:7px;background:#6cc494"></div>
<div class="t" style="left:1903px;top:838.1px;font-size:27px;line-height:27px;color:#36495d;font-weight:400;">Low</div>
<div class="r" style="left:2060px;top:847.9px;width:94px;height:9px;background:#d9d9d9;border-radius:5px;"></div>
<div class="r" style="left:2060px;top:847.9px;width:94px;height:9px;background:#2e9ccf;border-radius:5px;"></div>
<div class="t" style="left:2173px;top:845.5px;font-size:20px;line-height:20px;color:#5c6b7a;font-weight:400;letter-spacing:-1px;">100%</div>
<div class="t" style="left:2280.6px;top:837.6px;font-size:26px;line-height:26px;color:#3aa0d5;font-weight:400;">TS11186528</div>
<div class="t" style="left:2614.5px;top:837.9px;font-size:28px;line-height:28px;color:#36495d;font-weight:400;">Alice, Willson</div>
<div class="t" style="left:515px;top:906.0px;font-size:26px;line-height:26px;color:#36495d;font-weight:400;">TC4544554</div>
<div class="t" style="left:720.8px;top:906.0px;font-size:26px;line-height:26px;color:#36495d;font-weight:400;">Add credit card with invalid data</div>
<div class="t" style="left:1266.4px;top:909.0px;font-size:26px;line-height:26px;color:#36495d;font-weight:400;">To Review</div>
<svg class="r" style="left:1466px;top:913.5px;" width="24" height="17" viewBox="0 0 24 17"><path d="M2 9 L8.5 15 L22 2" fill="none" stroke="#5fbf8a" stroke-width="2.6"/></svg>
<div class="t" style="left:1501px;top:907.3px;font-size:28px;line-height:28px;color:#36495d;font-weight:400;">Passed</div>
<div class="r" style="left:1678px;top:913.9px;width:14px;height:14px;border-radius:7px;background:#8a96a3"></div>
<div class="r" style="left:1698px;top:913.9px;width:14px;height:14px;border-radius:7px;background:#d2d2d2"></div>
<div class="r" style="left:1718px;top:913.9px;width:14px;height:14px;border-radius:7px;background:#6cc494"></div>
<div class="r" style="left:1738px;top:913.9px;width:14px;height:14px;border-radius:7px;background:#e6ad45"></div>
<div class="r" style="left:1758px;top:913.9px;width:14px;height:14px;border-radius:7px;background:#e6ad45"></div>
<div class="r" style="left:1778px;top:913.9px;width:14px;height:14px;border-radius:7px;background:#6cc494"></div>
<div class="t" style="left:1903px;top:910.1px;font-size:27px;line-height:27px;color:#36495d;font-weight:400;">Low</div>
<div class="r" style="left:2060px;top:919.6px;width:94px;height:9px;background:#d9d9d9;border-radius:5px;"></div>
<div class="r" style="left:2060px;top:919.6px;width:94px;height:9px;background:#2e9ccf;border-radius:5px;"></div>
<div class="t" style="left:2173px;top:917.2px;font-size:20px;line-height:20px;color:#5c6b7a;font-weight:400;letter-spacing:-1px;">100%</div>
<div class="t" style="left:2280.6px;top:909.3px;font-size:26px;line-height:26px;color:#3aa0d5;font-weight:400;">TS1118560</div>
<div class="t" style="left:2614.5px;top:909.6px;font-size:28px;line-height:28px;color:#36495d;font-weight:400;">John, Miller</div>
<div class="r" style="left:514px;top:980px;width:2318px;height:2px;background:#e3e8ed;border-radius:0px;"></div>
<div class="t" style="left:513.7px;top:1005.7px;font-size:24px;line-height:24px;color:#98a1aa;font-weight:400;">Page 1 of 1 (7 items)</div>
<svg class="r" style="left:854px;top:1005px;" width="16" height="20" viewBox="0 0 16 20"><path d="M12 2 L4 10 L12 18" fill="none" stroke="#8f99a3" stroke-width="2"/></svg>
<div class="t" style="left:292px;width:1200px;text-align:center;top:1004.0px;font-size:24px;line-height:24px;color:#3aa0d5;font-weight:400;">1</div>
<svg class="r" style="left:915px;top:1005px;" width="16" height="20" viewBox="0 0 16 20"><path d="M4 2 L12 10 L4 18" fill="none" stroke="#8f99a3" stroke-width="2"/></svg>
<div class="r" style="left:882px;top:1041px;width:22px;height:3px;background:#3aa0d5;border-radius:0px;"></div>
<div class="t" style="left:1943.5px;width:1200px;text-align:center;top:1000.7px;font-size:24px;line-height:24px;color:#3aa0d5;font-weight:400;">50</div>
<div class="r" style="left:2530px;top:1040px;width:28px;height:3px;background:#3aa0d5;border-radius:0px;"></div>
<div class="t" style="left:1998.5px;width:1200px;text-align:center;top:1000.7px;font-size:24px;line-height:24px;color:#8f99a3;font-weight:400;">100</div>
<div class="t" style="left:2059px;width:1200px;text-align:center;top:1000.7px;font-size:24px;line-height:24px;color:#8f99a3;font-weight:400;">200</div>
<svg class="r" style="left:2752px;top:1005px;" width="32" height="26" viewBox="0 0 32 26"><path d="M2 12 H24 V24 H2 Z M7 12 V4 H14 L16 6 H29 V18 H24" fill="none" stroke="#9aa1a8" stroke-width="2"/></svg>
<svg class="r" style="left:2795px;top:1006px;" width="26" height="24" viewBox="0 0 26 24"><path d="M2 2 H24 V8 H2 Z M4 8 V22 H22 V8 M10 13 H16" fill="none" stroke="#9aa1a8" stroke-width="2"/></svg>
<div class="r" style="left:490px;top:1068px;width:2372px;height:700px;background:#ffffff;border-radius:2px;border-left:2px solid #eef1f4;box-sizing:border-box;"></div>
<div class="t" style="left:514.4px;top:1114.4px;font-size:34px;line-height:34px;color:#2f4055;font-weight:400;-webkit-text-stroke:1px #2f4055;">Test Steps</div>
<div class="r" style="left:518px;top:1184px;width:36px;height:36px;border-radius:18px;background:#2e9ccf"></div>
<div class="t" style="left:577px;top:1189.8px;font-size:28px;line-height:28px;color:#2f4055;font-weight:400;-webkit-text-stroke:0.8px #2f4055;">Account menu</div>
<div class="r" style="left:536px;top:1234px;width:2px;height:470px;background:#2e9ccf;border-radius:0px;"></div>
<svg class="r" style="left:574px;top:1243px;" width="20" height="20" viewBox="0 0 20 20"><rect x="1.5" y="1.5" width="17" height="17" rx="6" fill="none" stroke="#c5cad0" stroke-width="2"/><path d="M6 10 H14 M6 14 H12" stroke="#c5cad0" stroke-width="1.5"/></svg>
<div class="t" style="left:605.7px;top:1240.0px;font-size:28px;line-height:28px;color:#3b4b5f;font-weight:400;">Information about the test case:</div>
<div class="t" style="left:611.4px;top:1291.9px;font-size:26px;line-height:26px;color:#46576b;font-weight:400;">[ ${TestCaseField_Priority} ]</div>
<div class="t" style="left:611.4px;top:1333.5px;font-size:26px;line-height:26px;color:#46576b;font-weight:400;">[ ${TestCaseField_TestLevel} ]</div>
<div class="t" style="left:610.6px;top:1437.0px;font-size:27.5px;line-height:27.5px;color:#3b4b5f;font-weight:400;">Click on the user avatar</div>
<div class="t" style="left:610.6px;top:1474.3px;font-size:28px;line-height:28px;color:#3b4b5f;font-weight:400;">The dropdown with the menu appears</div>
<div class="r" style="left:611px;top:1542px;width:516px;height:170px;background:#2d3a4a;border-radius:0px;border-left:2px solid #9aa3ad;border-right:2px solid #9aa3ad;box-sizing:border-box;"></div>
<div class="r" style="left:613px;top:1662px;width:512px;height:50px;background:#364558;border-radius:0px;"></div>
<div class="r" style="left:638px;top:1566px;width:64px;height:69px;border-radius:50%;background:#e1e4e8"></div>
<svg class="r" style="left:652px;top:1582px;" width="36" height="36" viewBox="0 0 36 36"><circle cx="18" cy="18" r="14" fill="none" stroke="#c4c9cf" stroke-width="1.5"/><circle cx="18" cy="14" r="5" fill="none" stroke="#c4c9cf" stroke-width="1.5"/><path d="M9 27 Q18 18 27 27" fill="none" stroke="#c4c9cf" stroke-width="1.5"/></svg>
<div class="t" style="left:720.5px;top:1572.1px;font-size:27px;line-height:27px;color:#e6e9ed;font-weight:400;-webkit-text-stroke:0.9px #e6e9ed;">test user</div>
<div class="t" style="left:720.5px;top:1608.9px;font-size:21px;line-height:21px;color:#c0c6ce;font-weight:400;">kateryna.hornysh@gmail.com</div>
<svg class="r" style="left:1066px;top:1577px;" width="42" height="44" viewBox="0 0 42 44"><circle cx="16" cy="16" r="13" fill="none" stroke="#c8cdd3" stroke-width="2.5"/><path d="M26 26 L38 40" stroke="#c8cdd3" stroke-width="3"/></svg>
<div class="r" style="left:626px;top:1662px;width:338px;height:60px;background:#ffffff;border-radius:8px;"></div>
<div class="t" style="left:652px;top:1688.3px;font-size:28px;line-height:28px;color:#33475b;font-weight:400;">Open profile</div>
<div class="r" style="left:2878px;top:78px;width:2px;height:1626px;background:#e6e8ea;border-radius:0px;"></div>
<div class="r" style="left:0px;top:2px;width:2px;height:76px;background:#6fb3d6;border-radius:0px;"></div>
<div class="r" style="left:0px;top:78px;width:2px;height:1626px;background:#eceef0;border-radius:0px;"></div>
<div class="r" style="left:0px;top:1702px;width:2880px;height:2px;background:#eceef0;border-radius:0px;"></div>
<div class="r" style="left:0;top:0;width:2880px;height:1704px;box-sizing:border-box;border:2px solid rgba(120,180,215,0.0);border-radius:20px;pointer-events:none"></div></div></body></html>
